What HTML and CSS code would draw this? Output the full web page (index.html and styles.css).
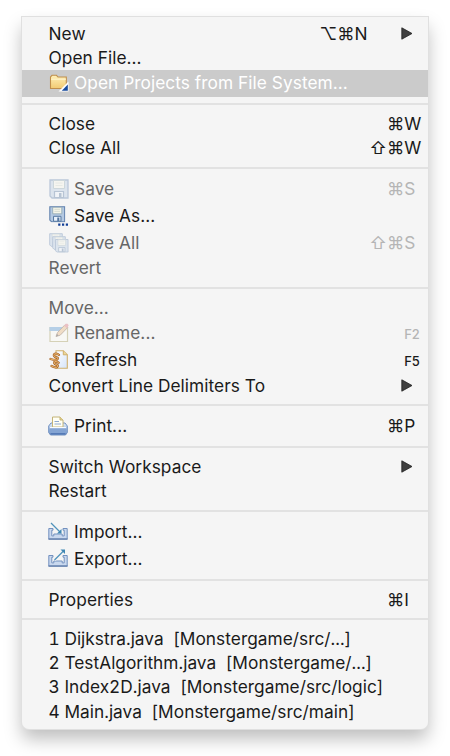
FILE: index.html
```html
<!DOCTYPE html>
<html lang="en">
<head>
<meta charset="utf-8">
<title>File menu</title>
<link rel="stylesheet" href="styles.css">
</head>
<body>
<svg class="defs" aria-hidden="true">
  <defs>
    <linearGradient id="gold" x1="0" y1="0" x2="0" y2="1"><stop offset="0" stop-color="#fff0b8"/><stop offset="1" stop-color="#f2ca72"/></linearGradient>
    <linearGradient id="blue" x1="0" y1="0" x2="0" y2="1"><stop offset="0" stop-color="#e4effb"/><stop offset="1" stop-color="#6f93c8"/></linearGradient>
    <linearGradient id="paper" x1="0" y1="0" x2="1" y2="1"><stop offset="0" stop-color="#fff"/><stop offset="1" stop-color="#d5e4fa"/></linearGradient>
    <symbol id="floppy" viewBox="0 0 20 20">
      <path d="M1 1h18v18H3l-2-2z" fill="#b4c9e2" stroke="#5f80ad" stroke-width="1.3"/>
      <path d="M4.500 1.500h11v8h-11z" fill="#f5f5e9" stroke="#8fa7b2"/>
      <path d="M6.500 4h7M6.500 6.500h7" stroke="#cfd6cb"/>
      <path d="M5.500 12.500h9v6h-9z" fill="#e8f1fc" stroke="#54769f" stroke-width="1.2"/>
      <path d="M10 14h2.500v4.500H10z" fill="#54769f"/>
    </symbol>
    <symbol id="arrow" viewBox="0 0 12 13"><path d="M.8.8 11 6.500.8 12.200z" fill="#3f3f3f" stroke="#1f1f1f" stroke-width=".8"/></symbol>
    <symbol id="tray" viewBox="0 0 20 20"><path d="M.8 6.500h4.200v1.700H3.800v5.700h2V12h8.400v1.900h2V8.200H15V6.500h4.200v10.700H.8z" fill="#c9d8ee" stroke="#7391bf"/><path d="M.5 17h19" stroke="#7089b3" stroke-width="1.600"/></symbol>
  </defs>
</svg>
<nav class="menu">
  <div class="item"><span class="label">New</span><span class="mods mods-sub">⌥⌘N</span><svg class="arrow"><use href="#arrow"/></svg></div>
  <div class="item"><span class="label">Open File...</span></div>
  <div class="item with-icon selected">
    <svg class="icon" viewBox="0 0 20 20"><path d="M1.500 15.500V4l1.500-1.700h4.500L9 4h8.300v11.500z" fill="url(#gold)" stroke="#c08f4c" stroke-width="1.100"/><path d="M2 6.200h15" stroke="#fff5cf"/><path d="M9.500 18.500 19.500 8.500v10z" fill="#fff"/><path d="M12.800 17.800l6-6.200v6.200z" fill="#174a9c"/></svg>
    <span class="label">Open Projects from File System...</span></div>
  <hr>
  <div class="item"><span class="label">Close</span><span class="mods">⌘</span><span class="key">W</span></div>
  <div class="item"><span class="label">Close All</span><span class="mods">⇧⌘</span><span class="key">W</span></div>
  <hr>
  <div class="item with-icon disabled"><svg class="icon"><use href="#floppy"/></svg><span class="label">Save</span><span class="mods">⌘</span><span class="key">S</span></div>
  <div class="item with-icon">
    <svg class="icon" viewBox="0 0 20 20"><use href="#floppy" width="16.500" height="16.500"/><path d="M9.200 17.500h2.200v2.200H9.200zM13 17.500h2.200v2.200H13zM16.800 17.500H19v2.200h-2.200z" fill="#123f96"/></svg>
    <span class="label">Save As...</span></div>
  <div class="item with-icon disabled">
    <svg class="icon" viewBox="0 0 20 20"><use href="#floppy" width="14" height="14"/><use href="#floppy" x="3" y="3" width="14" height="14"/><use href="#floppy" x="5.800" y="5.800" width="14" height="14"/></svg>
    <span class="label">Save All</span><span class="mods">⇧⌘</span><span class="key">S</span></div>
  <div class="item disabled"><span class="label">Revert</span></div>
  <hr>
  <div class="item disabled"><span class="label">Move...</span></div>
  <div class="item with-icon disabled">
    <svg class="icon" viewBox="0 0 20 20"><path d="M1 4.500h17.500v14H1z" fill="#fffef5" stroke="#a39755" stroke-width="1.200"/><path d="M.5 4h13v4H.5z" fill="#4f94d3"/><path d="M7 13.500 8.500 9.500 16 1.800l3 2.400-7.800 8z" fill="#eab77b" stroke="#815e43"/><path d="m15 2.800 1.800-2h1.700l1.200 1.500-1.700 3z" fill="#d96f78"/><path d="m7 13.500 1-2.500 1.700 1.500z" fill="#333"/></svg>
    <span class="label">Rename...</span><span class="key fkey">F2</span></div>
  <div class="item with-icon">
    <svg class="icon" viewBox="0 0 20 20"><path d="M7 .8h7.300l4 4v13.500H7z" fill="url(#paper)" stroke="#d0b06c" stroke-width="1.100"/><path d="M14.300.8v4h4" fill="#ecd799" stroke="#d0b06c"/><g fill="none" stroke-linecap="round" stroke-linejoin="round"><path d="M10 5C8 2.800 4 3.500 5 5.800s4.700 1 3.800 3-3.800 1.200-7.300.2M9.700 12.800c-2-2-5.200-1.500-4.400.4s4.200 1 3.400 3-3.600 1.200-6.200-.2" stroke="#a8662a" stroke-width="2.300"/><path d="M10 5C8 2.800 4 3.500 5 5.800s4.700 1 3.800 3-3.800 1.200-7.300.2M9.700 12.800c-2-2-5.200-1.500-4.400.4s4.200 1 3.400 3-3.600 1.200-6.200-.2" stroke="#f8c67c" stroke-width=".9"/></g></svg>
    <span class="label">Refresh</span><span class="key fkey">F5</span></div>
  <div class="item"><span class="label">Convert Line Delimiters To</span><svg class="arrow"><use href="#arrow"/></svg></div>
  <hr>
  <div class="item with-icon">
    <svg class="icon print" viewBox="0 0 20 20"><path d="M3 7h14l2.300 3v6.500L17.500 19h-15L.7 16.500V10z" fill="url(#blue)" stroke="#7090c0"/><path d="M4.500 11V1h7.500l3 3v7z" fill="#fffff5" stroke="#c4b478"/><path d="M12 1v3h3" fill="#ead58c" stroke="#c4b478"/><path d="M6.500 5.500h4.500M6.500 8h6.500" stroke="#8fa9d0"/><path d="M2 11.500h16" stroke="#f8fbff" stroke-width="1.100"/><path d="M1.300 12.500h17.400V16l-1.700 2.300H3L1.300 16z" fill="#84a4d3"/><path d="M2.500 17.800h15" stroke="#5379b5" stroke-width="1.500"/></svg>
    <span class="label">Print...</span><span class="mods">⌘</span><span class="key">P</span></div>
  <hr>
  <div class="item"><span class="label">Switch Workspace</span><svg class="arrow"><use href="#arrow"/></svg></div>
  <div class="item"><span class="label">Restart</span></div>
  <hr>
  <div class="item with-icon">
    <svg class="icon tray" viewBox="0 0 20 20"><use href="#tray" width="20" height="20"/><path d="m3 1 9.500 9.500" stroke="#f5f5f5" stroke-width="3"/><path d="m3 1 9.500 9.500" stroke="#4f92bb" stroke-width="1.200"/><path d="M13.500 7v4.500H9z" fill="#3f87b3"/></svg>
    <span class="label">Import...</span></div>
  <div class="item with-icon">
    <svg class="icon tray" viewBox="0 0 20 20"><use href="#tray" width="20" height="20"/><path d="m6.500 11 9-9" stroke="#f5f5f5" stroke-width="3"/><path d="m6.500 11 9-9" stroke="#4f92bb" stroke-width="1.200"/><path d="M12.500.5H17V5z" fill="#3f87b3"/></svg>
    <span class="label">Export...</span></div>
  <hr>
  <div class="item"><span class="label">Properties</span><span class="mods">⌘</span><span class="key">I</span></div>
  <hr>
  <div class="item recent"><span class="label">1 Dijkstra.java  [Monstergame/src/...]</span></div>
  <div class="item recent"><span class="label">2 TestAlgorithm.java  [Monstergame/...]</span></div>
  <div class="item recent"><span class="label">3 Index2D.java  [Monstergame/src/logic]</span></div>
  <div class="item recent"><span class="label">4 Main.java  [Monstergame/src/main]</span></div>
</nav>
</body>
</html>
```
FILE: styles.css
```css
* { box-sizing: border-box; }
body {
  margin: 0;
  padding: 17px 0 0 21.5px;
  height: 756px;
  overflow: hidden;
  background: #fff;
  font-family: Inter, "Liberation Sans", sans-serif;
  font-size: 17.3px;
  color: #1a1a1a;
}
.defs { position: absolute; width: 0; height: 0; }
.menu {
  width: 406.5px;
  height: 711.5px;
  padding-top: 4.6px;
  background: #f5f5f5;
  border-radius: 0 0 7px 7px;
  box-shadow: 0 0 0 1px #e0e0e0, 0 10px 18px rgba(0, 0, 0, .26);
}
.item {
  display: flex;
  align-items: center;
  height: 24.2px;
  padding-left: 27px;
  white-space: pre;
}
.with-icon { height: 26.8px; }
.label { flex: 1; letter-spacing: .05px; position: relative; top: -.4px; }
.recent .label { letter-spacing: .03px; font-variant-numeric: tabular-nums; }
.selected { background: #cbcbcb; color: #fff; }
.disabled { color: #666; }
.disabled .icon { opacity: .38; }
.disabled .mods, .disabled .key { color: #b5b5b5; }
.icon { width: 20px; height: 20px; margin-right: 5.5px; flex: none; }
.tray, .print { margin-left: -.5px; margin-right: 6px; }
.mods, .key { margin-top: -.8px; }
.key { width: 23.7px; }
.mods-sub { margin-right: 33.5px; }
.fkey { font-size: 13px; font-weight: 500; letter-spacing: -.2px; padding-top: 3px; }
.arrow { width: 12px; height: 13px; margin-right: 15px; }
hr {
  margin: 6.65px 0;
  border: 0;
  height: 2px;
  background: #e2e2e2;
}
```
